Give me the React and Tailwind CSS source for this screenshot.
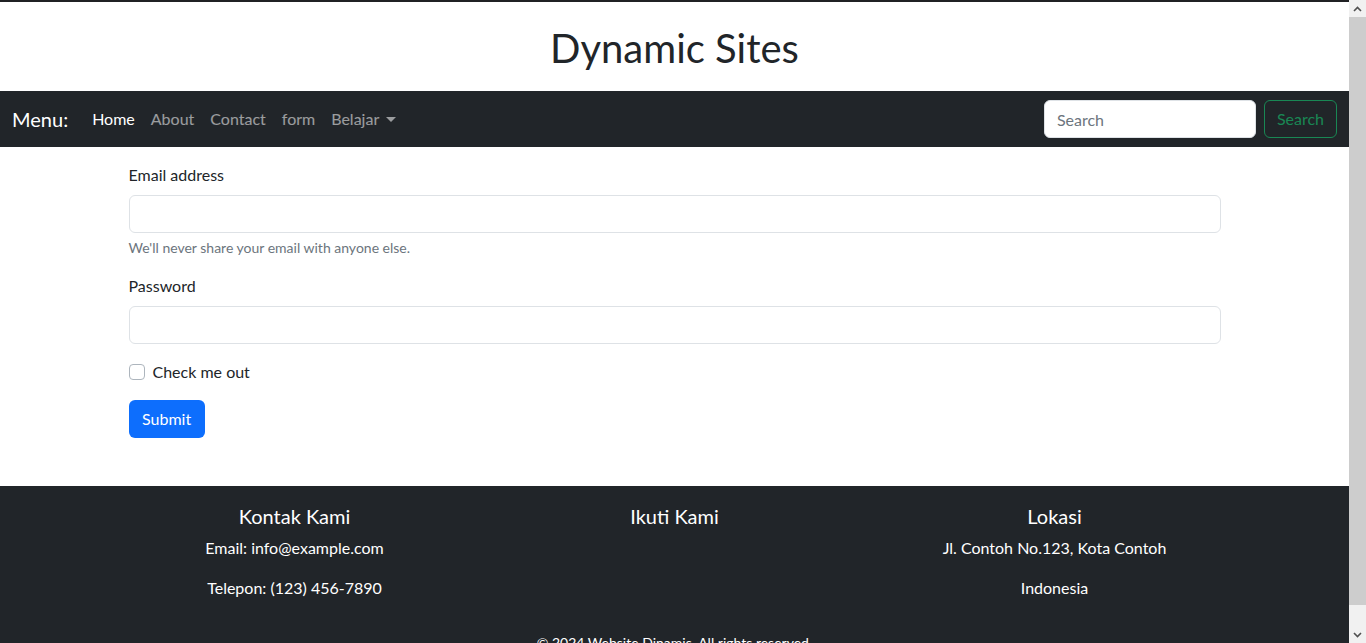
import React from "react";

const font = { fontFamily: "Lato, 'Open Sans', sans-serif" };

function Navbar() {
  return (
    <nav className="h-14 bg-[#212529] px-3 flex items-center">
      <span className="text-[20px] text-white mr-4 leading-[30px]">Menu:</span>
      <ul className="flex items-center">
        <li className="px-2 text-white">Home</li>
        <li className="px-2 text-white/55">About</li>
        <li className="px-2 text-white/55">Contact</li>
        <li className="px-2 text-white/55">form</li>
        <li className="px-2 text-white/55 flex items-center">
          Belajar
          <span className="ml-[7px] mt-[1px] border-t-[5px] border-x-[5px] border-x-transparent border-t-white/55" />
        </li>
      </ul>
      <form className="ml-auto flex items-center">
        <input
          type="search"
          placeholder="Search"
          className="w-[212px] h-[38px] px-3 rounded-md bg-white border border-[#dee2e6] text-[#212529] placeholder:text-[#6c757d] outline-none"
        />
        <button
          type="button"
          className="ml-2 h-[38px] px-3 rounded-md border border-[#198754] text-[#198754]"
        >
          Search
        </button>
      </form>
    </nav>
  );
}

function LoginForm() {
  return (
    <form className="w-[1092px] mx-auto pt-4 pb-12 text-[#212529]">
      <div className="mb-4">
        <label className="block mb-2 leading-6">Email address</label>
        <input
          type="email"
          className="block w-full h-[38px] rounded-md border border-[#dee2e6] bg-white"
        />
        <div className="mt-1 text-[14px] leading-[21px] text-[#6c757d]">
          We'll never share your email with anyone else.
        </div>
      </div>
      <div className="mb-4">
        <label className="block mb-2 leading-6">Password</label>
        <input
          type="password"
          className="block w-full h-[38px] rounded-md border border-[#dee2e6] bg-white"
        />
      </div>
      <div className="mb-4 flex items-center h-6">
        <span className="w-4 h-4 rounded-[4px] border border-[#adb5bd] bg-white" />
        <label className="ml-2 leading-6">Check me out</label>
      </div>
      <button
        type="button"
        className="h-[38px] px-[13.5px] rounded-md bg-[#0d6efd] text-white"
      >
        Submit
      </button>
    </form>
  );
}

function Footer() {
  const cols = [
    { title: "Kontak Kami", lines: ["Email: info@example.com", "Telepon: (123) 456-7890"] },
    { title: "Ikuti Kami", lines: [] },
    { title: "Lokasi", lines: ["Jl. Contoh No.123, Kota Contoh", "Indonesia"] },
  ];
  return (
    <footer className="bg-[#212529] text-white pt-[18px] pb-6">
      <div className="w-[1140px] mx-auto">
        <div className="grid grid-cols-3 text-center">
          {cols.map((c) => (
            <div key={c.title}>
              <h5 className="text-[20px] leading-6 mb-2">{c.title}</h5>
              {c.lines.map((l) => (
                <p key={l} className="leading-6 mb-4">
                  {l}
                </p>
              ))}
            </div>
          ))}
        </div>
        <p className="mt-4 text-center text-sm leading-[21px]">
          © 2024 Website Dinamis. All rights reserved.
        </p>
      </div>
    </footer>
  );
}

function Scrollbar() {
  return (
    <div className="w-[17px] flex flex-col bg-[#f1f1f1]">
      <div className="h-[17px] flex items-center justify-center">
        <svg width="9" height="6" viewBox="0 0 9 6">
          <path d="M1 5 L4.5 1.5 L8 5" stroke="#505050" strokeWidth="1.6" fill="none" />
        </svg>
      </div>
      <div className="h-[588px] bg-[#cdcdcd]" />
      <div className="flex-1" />
      <div className="h-[17px] flex items-center justify-center">
        <svg width="9" height="6" viewBox="0 0 9 6">
          <path d="M1 1 L4.5 4.5 L8 1" stroke="#505050" strokeWidth="1.6" fill="none" />
        </svg>
      </div>
    </div>
  );
}

export default function App() {
  return (
    <div className="flex h-[643px] overflow-hidden bg-white" style={font}>
      <div className="flex-1 overflow-hidden">
        <div className="h-[2px] bg-[#202124]" />
        <header className="h-[89px] flex items-center justify-center">
          <h1 className="text-[40px] leading-[48px] text-[#212529] mt-[2px]">Dynamic Sites</h1>
        </header>
        <Navbar />
        <LoginForm />
        <Footer />
      </div>
      <Scrollbar />
    </div>
  );
}
